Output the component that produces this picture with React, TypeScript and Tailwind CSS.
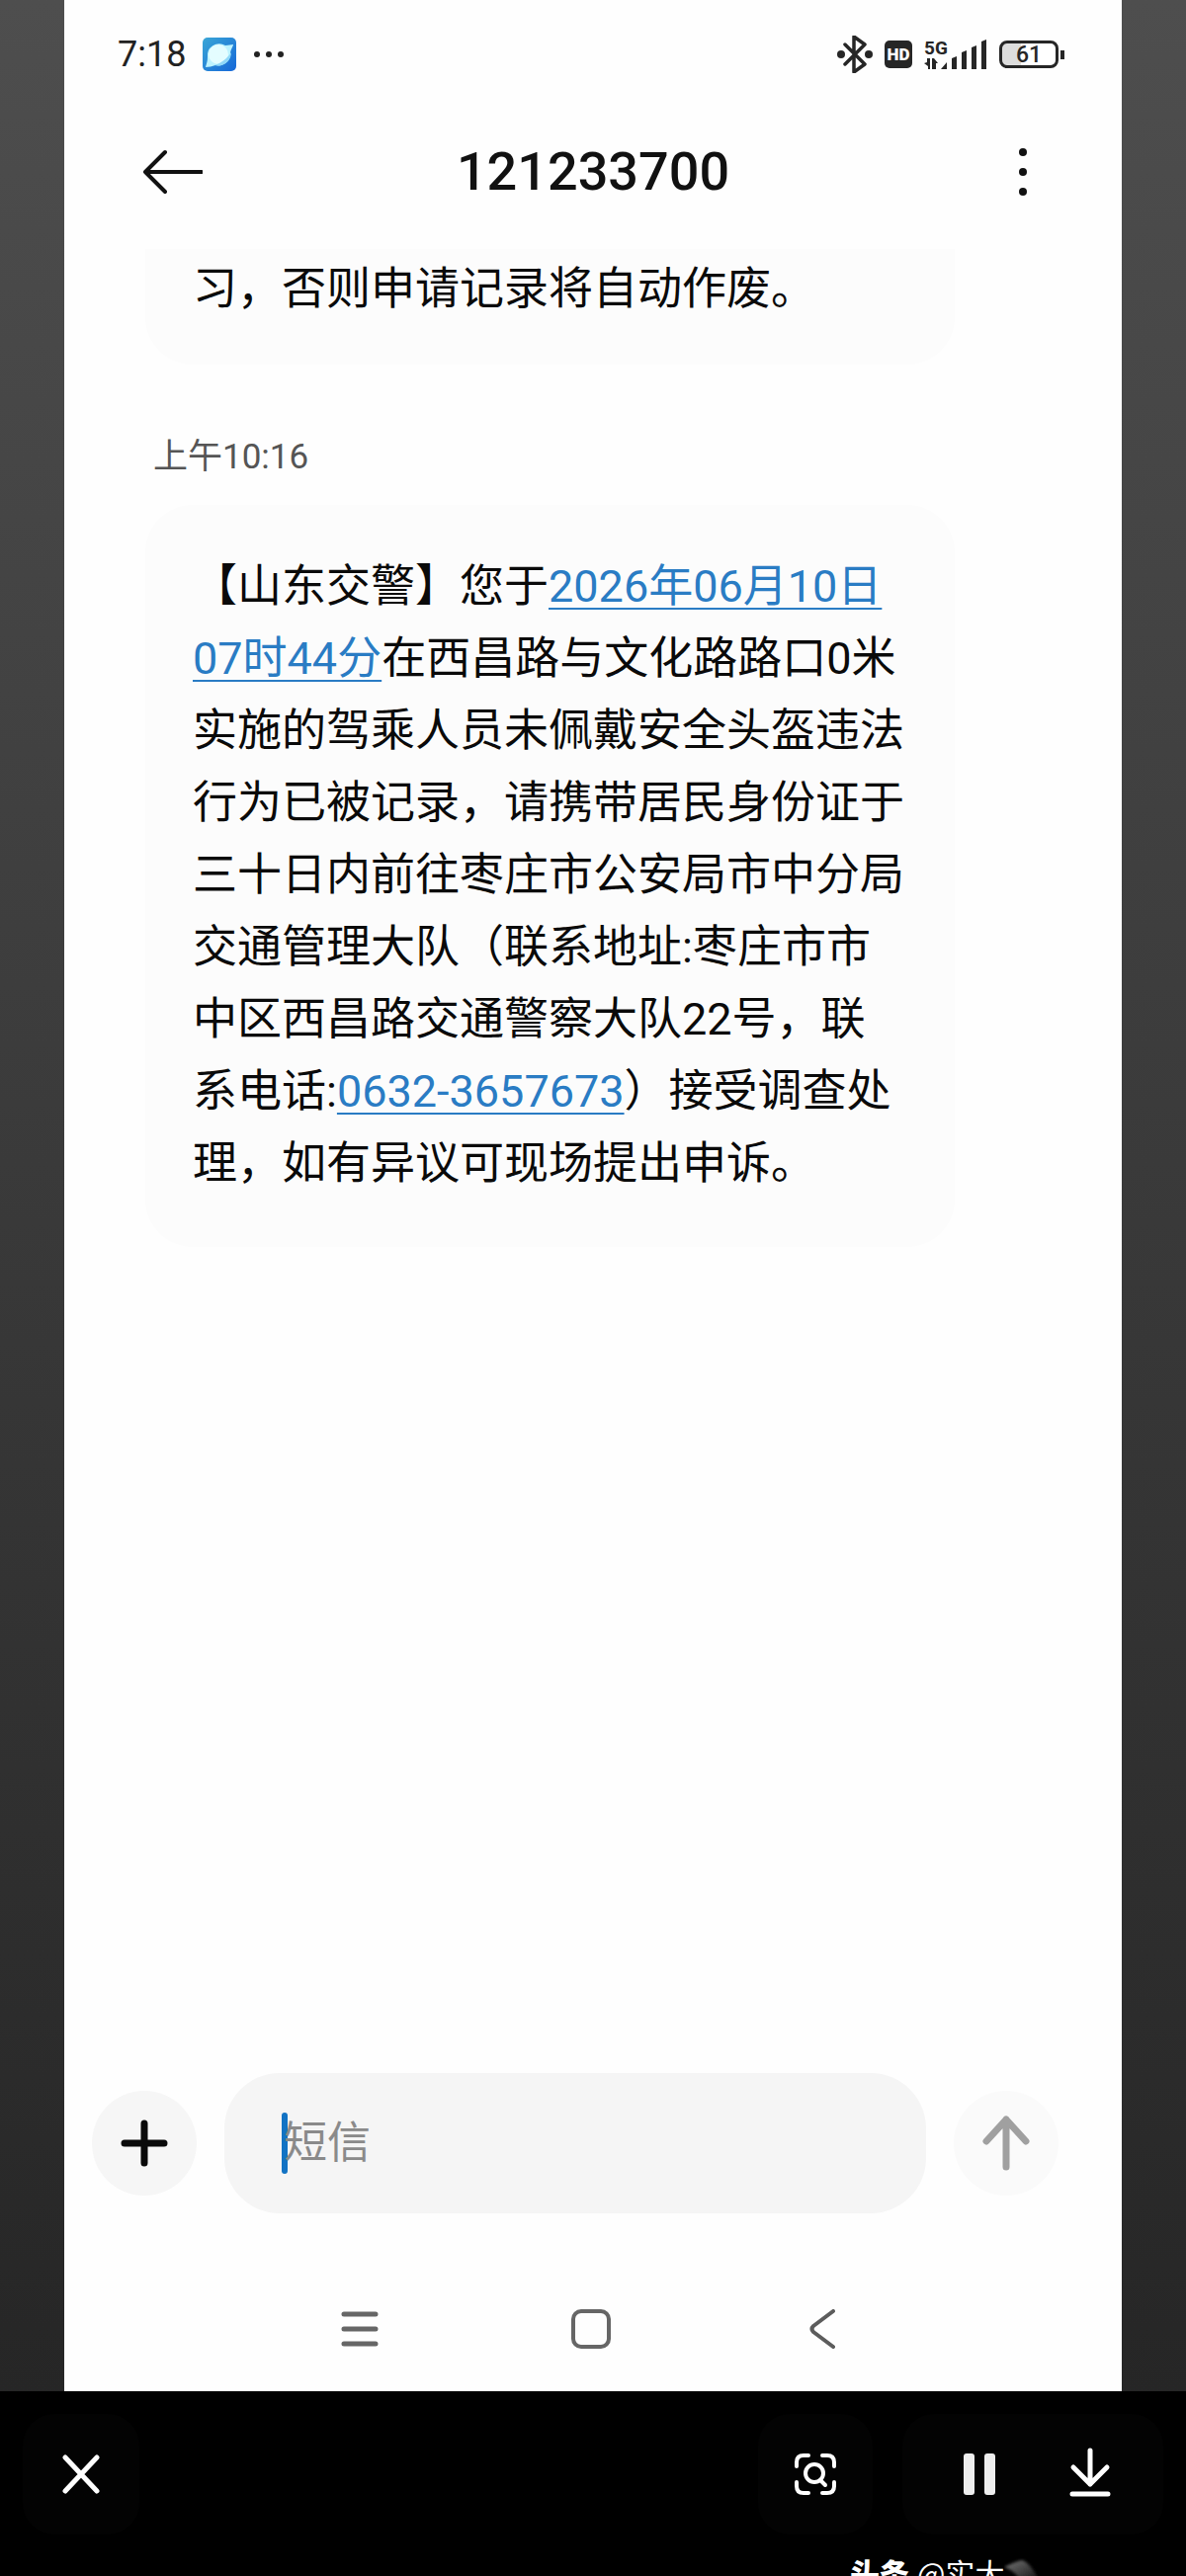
import React, { useState } from 'react';

const MESSAGES = {
  previous: '习，否则申请记录将自动作废。',
  time: '上午10:16',
};

const StatusBar: React.FC = () => (
  <div className="flex h-[110px] items-center justify-between pl-[54px] pr-[58px]">
    <div className="flex items-center">
      <span className="text-[36px] leading-[40px] text-[#222]">7:18</span>
      <svg className="ml-4 h-9 w-9" viewBox="0 0 36 36" aria-hidden="true">
        <defs>
          <linearGradient id="app" x1="0" y1="0" x2="1" y2="1">
            <stop offset="0" stopColor="#3aa6d6" />
            <stop offset="1" stopColor="#1668d8" />
          </linearGradient>
        </defs>
        <rect x="1" y="1" width="34" height="34" rx="5" fill="url(#app)" />
        <path d="M4 31c1-4 2-6 2-10a12 12 0 0 1 18-12c3 0 6-1 8-1 0 2-3 5-3 10a12 12 0 0 1-15 11c-3 1-7 2-10 2z" fill="#bdf3ff" />
        <circle cx="17" cy="18" r="10" fill="#e4fdff" />
        <path d="M13 29c7-2 13-7 17-13 0 9-8 15-17 13z" fill="#8fd8f8" />
      </svg>
      <svg className="ml-4 h-2 w-8" viewBox="0 0 32 8" fill="#222" aria-hidden="true">
        <circle cx="4" cy="4" r="3" />
        <circle cx="16" cy="4" r="3" />
        <circle cx="28" cy="4" r="3" />
      </svg>
    </div>

    <div className="flex items-center gap-3 text-[#262626]">
      {/* Bluetooth */}
      <svg className="h-[38px] w-[36px]" viewBox="0 0 36 38" fill="none" aria-hidden="true">
        <path d="M8 9l20 20-11 8V1l11 8L8 29" stroke="currentColor" strokeWidth="3.5" strokeLinejoin="round" strokeLinecap="round" />
        <circle cx="4" cy="19" r="4" fill="currentColor" />
        <circle cx="32" cy="19" r="4" fill="currentColor" />
      </svg>
      <span className="flex h-7 w-7 items-center justify-center rounded-[5px] bg-[#262626] text-[17px] font-black leading-none text-white">
        HD
      </span>
      {/* Signal */}
      <div className="flex items-end">
        <div className="flex flex-col">
          <span className="text-[19px] font-bold leading-[18px]">5G</span>
          <svg className="h-3 w-6" viewBox="0 0 24 12" fill="currentColor" aria-hidden="true">
            <path d="M3 1h3v11H4V9L0 6l3-1zM8 1h2l4 5h-2v6H8zM17 12l6-7v7z" />
          </svg>
        </div>
        <svg className="ml-1 h-[30px] w-[36px]" viewBox="0 0 36 30" fill="currentColor" aria-hidden="true">
          <path d="M0 19l5-2v13H0zM10 13l5-2v19h-5zM20 8l5-2v24h-5zM30 2l5-2v30h-5z" />
        </svg>
      </div>
      {/* Battery */}
      <div className="flex items-center gap-[2px]">
        <span className="flex h-7 w-[60px] items-center justify-center rounded-[8px] border-[3px] border-[#262626] bg-linear-to-r from-[#ddd] from-35% to-white to-35% text-[23px] font-medium leading-none">
          61
        </span>
        <span className="h-[9px] w-1 bg-[#262626]" />
      </div>
    </div>
  </div>
);

const Header: React.FC = () => (
  <header className="flex h-[126px] items-center justify-between pl-20 pr-[70px] pt-[2px]">
    <button type="button" aria-label="返回" className="flex h-15 w-15 items-center">
      <svg className="h-12 w-15" viewBox="0 0 60 48" fill="none" stroke="#111" strokeWidth="4" strokeLinecap="round" strokeLinejoin="round">
        <path d="M59 24H2M22 4L2 24l20 20" />
      </svg>
    </button>
    <h1 className="grow pr-[10px] text-center text-[54px] font-medium leading-[60px] text-[#111]">121233700</h1>
    <button type="button" aria-label="更多" className="flex h-15 w-15 items-center justify-center">
      <svg className="h-12 w-2" viewBox="0 0 8 48" fill="#111">
        <circle cx="4" cy="4" r="4" />
        <circle cx="4" cy="24" r="4" />
        <circle cx="4" cy="44" r="4" />
      </svg>
    </button>
  </header>
);

const Conversation: React.FC = () => (
  <main className="flex grow flex-col items-start px-[82px] pt-4 text-[45px] leading-[73px] text-[#0a0a0a]">
    <p className="w-[819px] max-w-full rounded-b-[48px] bg-[#fcfcfc] px-12 pb-10 pt-1">{MESSAGES.previous}</p>
    <time className="mt-[70px] px-2 text-[35px] leading-[48px] text-[#555]">{MESSAGES.time}</time>
    <p className="mt-6 w-[819px] max-w-full rounded-[48px] bg-[#fcfcfc] px-12 pb-12 pt-[46px]">
      【山东交警】您于
      <a href="#date" className="text-[#2a7cc4] underline decoration-2 underline-offset-6">2026年06月10日07时44分</a>
      在西昌路与文化路路口0米实施的驾乘人员未佩戴安全头盔违法行为已被记录，请携带居民身份证于三十日内前往枣庄市公安局市中分局交通管理大队（联系地址:枣庄市市中区西昌路交通警察大队22号，联系电话:
      <a href="tel:0632-3657673" className="text-[#2a7cc4] underline decoration-2 underline-offset-6">0632-3657673</a>
      ）接受调查处理，如有异议可现场提出申诉。
    </p>
  </main>
);

const Composer: React.FC = () => {
  const [text, setText] = useState('');

  return (
    <form className="flex items-center gap-7 pl-7 pr-16" onSubmit={(e) => e.preventDefault()}>
      <button type="button" aria-label="添加" className="flex size-[106px] shrink-0 items-center justify-center rounded-full bg-[#f6f6f6]">
        <svg className="size-12" viewBox="0 0 48 48" stroke="#0a0a0a" strokeWidth="7" strokeLinecap="round">
          <path d="M24 4v40M4 24h40" />
        </svg>
      </button>
      <label className="flex h-[142px] min-w-0 grow items-center rounded-[56px] bg-[#f5f5f5] pl-[58px] pr-10">
        <span className="h-[62px] w-[6px] shrink-0 rounded-full bg-[#1273c4]" />
        <input
          type="text"
          aria-label="短信"
          className="-ml-1 w-full min-w-0 bg-transparent text-[44px] leading-[60px] text-[#111] placeholder-[#8a8a8a] outline-none"
          placeholder="短信"
          value={text}
          onChange={(e) => setText(e.target.value)}
        />
      </label>
      <button type="submit" aria-label="发送" className="flex size-[106px] shrink-0 items-center justify-center rounded-full bg-[#fafafa]">
        <svg className="h-14 w-12" viewBox="0 0 48 56" fill="none" stroke="#a0a0a0" strokeWidth="7" strokeLinecap="round" strokeLinejoin="round">
          <path d="M24 52V4M4 26L24 4l20 22" />
        </svg>
      </button>
    </form>
  );
};

const SystemNav: React.FC = () => (
  <nav className="flex h-[180px] items-center justify-center gap-[194px] pr-1 pt-[54px]">
    <button type="button" aria-label="最近任务">
      <svg className="size-10" viewBox="0 0 40 40" stroke="#666" strokeWidth="5" strokeLinecap="round">
        <path d="M4 5h32M4 20h32M4 35h32" />
      </svg>
    </button>
    <button type="button" aria-label="主屏幕">
      <svg className="size-10" viewBox="0 0 40 40" fill="none" stroke="#666" strokeWidth="4">
        <rect x="2" y="2" width="36" height="36" rx="8" />
      </svg>
    </button>
    <button type="button" aria-label="后退">
      <svg className="size-10" viewBox="0 0 40 40" fill="none" stroke="#5c5c5c" strokeWidth="4" strokeLinecap="round" strokeLinejoin="round">
        <path d="M31 2L11 17q-3 3 0 6l20 15" />
      </svg>
    </button>
  </nav>
);

const ViewerBar: React.FC = () => (
  <footer className="relative flex h-[187px] items-start justify-between overflow-hidden bg-black px-[23px] pt-[23px]">
    <button type="button" aria-label="关闭" className="flex h-[122px] w-[118px] items-center justify-center rounded-[32px] bg-[#030303]">
      <svg className="size-10" viewBox="0 0 40 40" stroke="#fff" strokeWidth="5" strokeLinecap="round">
        <path d="M4 3l32 34M36 3L4 37" />
      </svg>
    </button>
    <div className="flex gap-[30px]">
      <button type="button" aria-label="识图" className="flex h-[122px] w-[116px] items-center justify-center rounded-[32px] bg-[#030303]">
        <svg className="size-11" viewBox="0 0 44 44" fill="none" stroke="#fff" strokeWidth="4" strokeLinecap="round">
          <path d="M3 14V10q0-7 7-7h5M29 3h5q7 0 7 7v4M41 30v4q0 7-7 7h-5M15 41h-5q-7 0-7-7v-4" />
          <circle cx="21" cy="21" r="9" />
          <path d="M27 28l5 5" />
        </svg>
      </button>
      <div className="flex h-[122px] items-center rounded-[32px] bg-[#030303]">
        <button type="button" aria-label="暂停" className="flex h-full w-[132px] items-center justify-center pl-6">
          <svg className="h-11 w-8" viewBox="0 0 32 44" fill="#eee">
            <rect x="0" y="1" width="11" height="42" rx="3" />
            <rect x="21" y="1" width="11" height="42" rx="3" />
          </svg>
        </button>
        <button type="button" aria-label="下载" className="flex h-full w-[132px] items-center justify-center pb-1 pr-4">
          <svg className="h-[50px] w-11" viewBox="0 0 44 50" fill="none" stroke="#fff" strokeWidth="5" strokeLinecap="round" strokeLinejoin="round">
            <path d="M22 3v34M5 20l17 17 17-17M4 47h36" />
          </svg>
        </button>
      </div>
    </div>
    {/* Watermark running off the bottom edge */}
    <p className="absolute left-[860px] top-[167px] flex items-start whitespace-nowrap font-['Noto_Sans_CJK_SC',sans-serif] text-[30px] leading-[32px] text-white">
      <span className="font-black">头条</span>
      <span className="ml-2">@实大</span>
      <svg className="h-6 w-9" viewBox="0 0 36 24" aria-hidden="true">
        <defs>
          <linearGradient id="fade" x1="0" y1="0" x2="1" y2="1">
            <stop offset="0" stopColor="#777" />
            <stop offset="1" stopColor="#111" />
          </linearGradient>
          <filter id="soft">
            <feGaussianBlur stdDeviation="1.5" />
          </filter>
        </defs>
        <path d="M0 11Q12 5 18 4q8 2 17 20H16Q10 14 0 11z" fill="url(#fade)" filter="url(#soft)" />
      </svg>
    </p>
  </footer>
);

export default function App() {
  return (
    <div className="flex min-h-screen flex-col bg-black font-[Roboto,'Noto_Sans_CJK_SC',sans-serif]">
      <div className="flex grow flex-col bg-linear-to-b from-[#4e4e4e] to-[#262626] px-[65px]">
        <div className="flex grow flex-col bg-[#fefefe]">
          <StatusBar />
          <Header />
          <Conversation />
          <Composer />
          <SystemNav />
        </div>
      </div>
      <ViewerBar />
    </div>
  );
}
